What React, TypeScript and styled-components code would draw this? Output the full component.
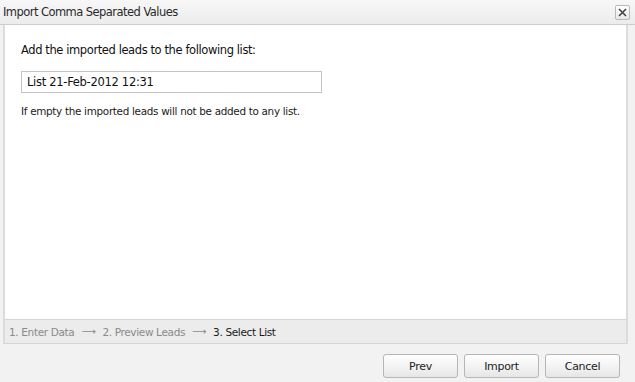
import React from "react";
import styled, { createGlobalStyle } from "styled-components";

const Global = createGlobalStyle`
  html, body { margin: 0; padding: 0; background: #f2f2f2; }
  body { font-family: "DejaVu Sans", Verdana, sans-serif; }
`;

const Dialog = styled.div`
  width: 635px;
  height: 382px;
  background: #f2f2f2;
  display: flex;
  flex-direction: column;
  overflow: hidden;
`;

const TitleBar = styled.div`
  height: 24px;
  flex: none;
  display: flex;
  align-items: center;
  justify-content: space-between;
  padding: 0 5px 0 3px;
  background: linear-gradient(#f7f7f7, #ececec);
  border-bottom: 1px solid #cdcdcd;
  color: #2a2a2a;
  font-size: 11.5px;
  letter-spacing: -0.55px;
`;

const CloseButton = styled.button`
  width: 15px;
  height: 15px;
  padding: 0;
  border: 1px solid #b9b9b9;
  border-radius: 2px;
  background: linear-gradient(#ffffff, #e9e9e9);
  display: flex;
  align-items: center;
  justify-content: center;
`;

const Panel = styled.div`
  margin: 0 7px 0 3px;
  border-left: 2px solid #dcdcdc;
  border-right: 2px solid #dcdcdc;
  border-bottom: 1px solid #d6d6d6;
  display: flex;
  flex-direction: column;
  height: 318px;
`;

const Body = styled.div`
  flex: 1;
  background: #ffffff;
  padding: 18px 16px 0 16px;
  display: flex;
  flex-direction: column;
`;

const Label = styled.div`
  font-size: 11.5px;
  letter-spacing: -0.4px;
  color: #111;
  line-height: 14px;
`;

const Input = styled.input`
  margin-top: 14px;
  width: 301px;
  height: 22px;
  box-sizing: border-box;
  border: 1px solid #c4c4c4;
  padding: 0 5px;
  font-family: "DejaVu Sans", Verdana, sans-serif;
  font-size: 11.5px;
  letter-spacing: -0.3px;
  color: #111;
  outline: none;
`;

const Hint = styled.div`
  margin-top: 12px;
  font-size: 10.4px;
  letter-spacing: -0.3px;
  color: #1a1a1a;
`;

const Steps = styled.div`
  height: 23px;
  flex: none;
  border-top: 1px solid #d4d4d4;
  background: #ececec;
  display: flex;
  align-items: center;
  gap: 7px;
  padding-left: 4px;
  font-size: 10.5px;
  letter-spacing: -0.35px;
`;

const Step = styled.span<{ $active?: boolean }>`
  color: ${(p) => (p.$active ? "#1a1a1a" : "#8a8a8a")};
`;

const Arrow = styled.span`
  color: #8a8a8a;
  font-size: 10px;
`;

const Footer = styled.div`
  flex: 1;
  display: flex;
  justify-content: flex-end;
  align-items: flex-start;
  gap: 6px;
  padding: 10px 15px 0 0;
`;

const Button = styled.button`
  width: 75px;
  height: 24px;
  border: 1px solid #b6b6b6;
  border-radius: 3px;
  background: linear-gradient(#ffffff, #f1f1f1 60%, #e6e6e6);
  font-family: "DejaVu Sans", Verdana, sans-serif;
  font-size: 11px;
  letter-spacing: -0.3px;
  color: #222;
  padding: 0;
`;

export default function App() {
  return (
    <>
      <Global />
      <Dialog>
        <TitleBar>
          <span>Import Comma Separated Values</span>
          <CloseButton aria-label="Close">
            <svg width="9" height="9" viewBox="0 0 9 9">
              <path d="M1 1 L8 8 M8 1 L1 8" stroke="#444" strokeWidth="1.6" />
            </svg>
          </CloseButton>
        </TitleBar>
        <Panel>
          <Body>
            <Label>Add the imported leads to the following list:</Label>
            <Input defaultValue="List 21-Feb-2012 12:31" />
            <Hint>If empty the imported leads will not be added to any list.</Hint>
          </Body>
          <Steps>
            <Step>1. Enter Data</Step>
            <Arrow>⟶</Arrow>
            <Step>2. Preview Leads</Step>
            <Arrow>⟶</Arrow>
            <Step $active>3. Select List</Step>
          </Steps>
        </Panel>
        <Footer>
          <Button>Prev</Button>
          <Button>Import</Button>
          <Button>Cancel</Button>
        </Footer>
      </Dialog>
    </>
  );
}
